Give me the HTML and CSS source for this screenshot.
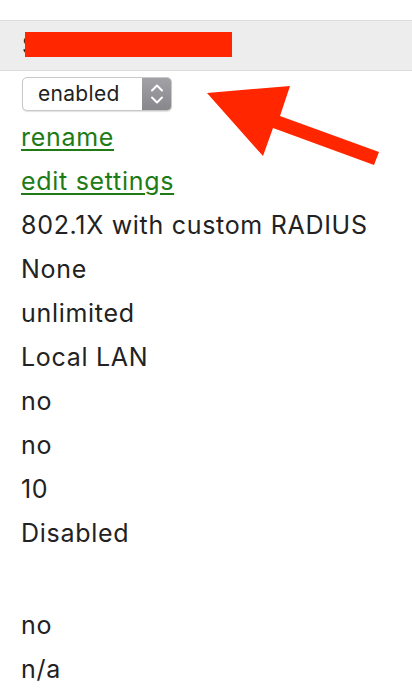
FILE: index.html
```html
<!DOCTYPE html>
<html lang="en">
<head>
    <meta charset="UTF-8">
    <meta name="viewport" content="width=device-width, initial-scale=1.0">
    <title>SSID settings</title>
    <link rel="stylesheet" href="styles.css">
</head>
<body>
    <div class="header">
        <span class="title">SSID</span>
        <span class="redact"></span>
    </div>

    <div class="values">
        <div class="row">
            <div class="select">
                <span class="select-text">enabled</span>
                <span class="select-btn">
                    <svg width="14" height="22" viewBox="0 0 14 22">
                        <path d="M2 7.5 L7 2.5 L12 7.5 M2 14.5 L7 19.5 L12 14.5" fill="none" stroke="#fff" stroke-width="2" stroke-linecap="round" stroke-linejoin="round"/>
                    </svg>
                </span>
            </div>
        </div>
        <div class="row"><a href="#">rename</a></div>
        <div class="row"><a href="#">edit settings</a></div>
        <div class="row">802.1X with custom RADIUS</div>
        <div class="row">None</div>
        <div class="row">unlimited</div>
        <div class="row">Local LAN</div>
        <div class="row">no</div>
        <div class="row">no</div>
        <div class="row">10</div>
        <div class="row">Disabled</div>
        <div class="row blank"></div>
        <div class="row">no</div>
        <div class="row">n/a</div>
    </div>

    <svg class="arrow" width="412" height="200" viewBox="0 0 412 200">
        <polygon points="207,93 290,86 280,116 379,152 374,165 273,128 263,156" fill="#ff2600"/>
    </svg>
</body>
</html>
```

FILE: styles.css
```css
body {
    margin: 0;
    padding: 20px 0 0;
    font-family: Inter, "Liberation Sans", Arial, sans-serif;
    color: #222;
    background: #fff;
    position: relative;
    overflow: hidden;
}
.header {
    height: 49px;
    background: #ededed;
    border-top: 1px solid #dcdcdc;
    border-bottom: 1px solid #dcdcdc;
    display: flex;
    align-items: center;
    padding-left: 22px;
    position: relative;
    font-size: 24px;
}
.redact {
    position: absolute;
    left: 25px;
    top: 11px;
    width: 207px;
    height: 25px;
    background: #ff2600;
}
.values {
    padding-left: 21px;
    font-size: 25px;
    letter-spacing: 0.7px;
}
.row {
    height: 44px;
    display: flex;
    align-items: center;
}
.row.blank {
    height: 48px;
}
.row a {
    color: #1e7b16;
    text-decoration: underline;
    text-underline-offset: 3px;
    text-decoration-thickness: 2px;
}
.select {
    margin-left: 1px;
    margin-top: 1px;
    width: 150px;
    height: 34px;
    box-sizing: border-box;
    border: 1px solid #c8c8c8;
    border-radius: 5px;
    display: flex;
    overflow: hidden;
    box-shadow: 0 1px 1px rgba(0,0,0,0.12);
    background: #fff;
    letter-spacing: 0.3px;
}
.select-text {
    flex: 1;
    padding-left: 15px;
    font-size: 21px;
    line-height: 32px;
    color: #222;
}
.select-btn {
    width: 29px;
    background: linear-gradient(#a2a2a6, #88888c);
    display: flex;
    align-items: center;
    justify-content: center;
}
.arrow {
    position: absolute;
    left: 0;
    top: 0;
}
```
